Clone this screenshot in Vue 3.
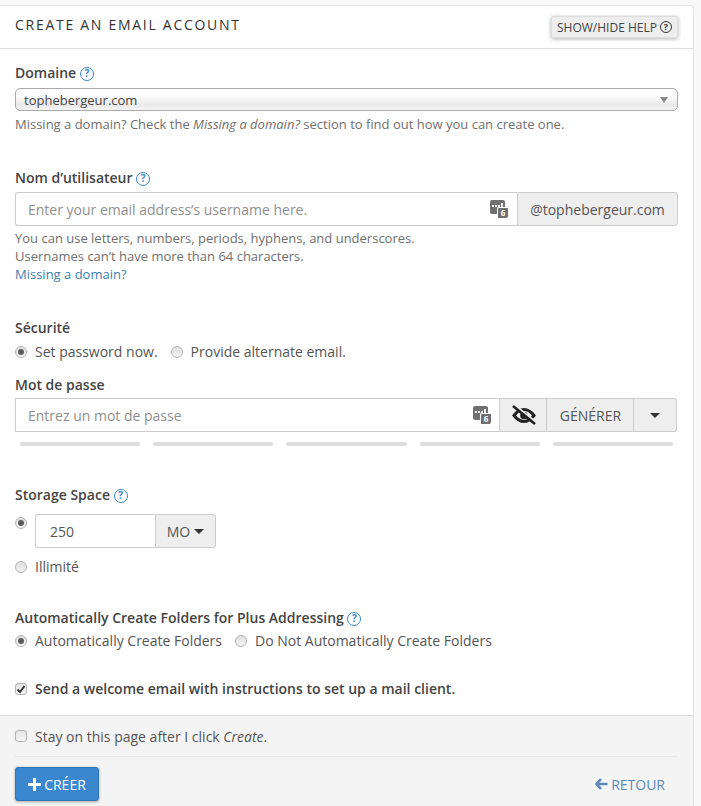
<template>
  <div class="page">
    <div class="panel">
      <div class="panel-head">
        <h1>CREATE AN EMAIL ACCOUNT</h1>
        <button class="help-toggle">SHOW/HIDE HELP <span class="q q-dark">?</span></button>
      </div>

      <div class="panel-body">
        <section class="domain">
          <label class="lbl">Domaine <span class="q">?</span></label>
          <div class="select">
            <span>tophebergeur.com</span>
            <i class="select-arrow"></i>
          </div>
          <p class="hint">Missing a domain? Check the <em>Missing a domain?</em> section to find out how you can create one.</p>
        </section>

        <section class="username">
          <label class="lbl">Nom d’utilisateur <span class="q">?</span></label>
          <div class="group">
            <div class="input grow">
              <span class="placeholder">Enter your email address’s username here.</span>
              <span class="strength-icon"><i class="dots"></i><b>6</b></span>
            </div>
            <div class="addon domain-addon">@tophebergeur.com</div>
          </div>
          <p class="hint first">You can use letters, numbers, periods, hyphens, and underscores.</p>
          <p class="hint">Usernames can’t have more than 64 characters.</p>
          <a class="hint link">Missing a domain?</a>
        </section>

        <section class="security">
          <label class="lbl">Sécurité</label>
          <div class="options">
            <span class="opt"><i class="radio on"></i>Set password now.</span>
            <span class="opt"><i class="radio"></i>Provide alternate email.</span>
          </div>
          <label class="lbl pass-lbl">Mot de passe</label>
          <div class="group pass-group">
            <div class="input grow">
              <span class="placeholder">Entrez un mot de passe</span>
              <span class="strength-icon"><i class="dots"></i><b>6</b></span>
            </div>
            <div class="addon eye">
              <svg width="24" height="20" viewBox="0 0 24 20">
                <path d="M2 10.500 C5.500 6 9 4.500 12 4.500 C15 4.500 18.500 6 22 10.500 C18.500 15 15 16.500 12 16.500 C9 16.500 5.500 15 2 10.500 Z" fill="none" stroke="#222" stroke-width="3" />
                <circle cx="12" cy="10.500" r="3.800" fill="#222" />
                <path d="M2.500 0 L24.500 17.500" stroke="#eee" stroke-width="2" />
                <path d="M1 1 L23 19" stroke="#222" stroke-width="2.600" />
              </svg>
            </div>
            <div class="addon gen">GÉNÉRER</div>
            <div class="addon more"><i class="caret"></i></div>
          </div>
          <div class="bars">
            <i v-for="n in 5" :key="n"></i>
          </div>
        </section>

        <section class="storage">
          <label class="lbl">Storage Space <span class="q">?</span></label>
          <div class="quota">
            <i class="radio on"></i>
            <div class="group quota-group">
              <div class="input quota-input">250</div>
              <div class="addon unit">MO <i class="caret"></i></div>
            </div>
          </div>
          <span class="opt unlimited"><i class="radio"></i>Illimité</span>
        </section>

        <section class="folders">
          <label class="lbl">Automatically Create Folders for Plus Addressing <span class="q">?</span></label>
          <div class="options">
            <span class="opt"><i class="radio on"></i>Automatically Create Folders</span>
            <span class="opt"><i class="radio"></i>Do Not Automatically Create Folders</span>
          </div>
        </section>

        <div class="welcome">
          <i class="check on">
            <svg width="10" height="10" viewBox="0 0 10 10"><path d="M1.500 5.500 L4 8 L8.500 2" fill="none" stroke="#333" stroke-width="2" /></svg>
          </i>
          Send a welcome email with instructions to set up a mail client.
        </div>
      </div>

      <div class="panel-foot">
        <div class="stay"><i class="check"></i>Stay on this page after I click&nbsp;<em>Create</em>.</div>
        <div class="actions">
          <button class="create"><span class="plus"></span>CRÉER</button>
          <a class="back">
            <svg width="13" height="12" viewBox="0 0 13 12"><path d="M6 1 L1.500 6 L6 11 M2 6 H12.500" fill="none" stroke="#5b8ab8" stroke-width="2.600" /></svg>
            RETOUR
          </a>
        </div>
      </div>
    </div>
  </div>
</template>

<script setup>
</script>

<style>
html, body { margin: 0; background: #f9f9f9; }
</style>

<style scoped>
.page {
  width: 701px;
  height: 806px;
  overflow: hidden;
  padding-top: 5px;
  box-sizing: border-box;
  font-family: "Open Sans", sans-serif;
  font-size: 14px;
  color: #444;
}

.panel {
  width: 694px;
  height: 801px;
  box-sizing: border-box;
  background: #fff;
  border: 1px solid #e3e3e3;
  border-left: none;
  border-bottom: none;
  border-radius: 0 4px 0 0;
  display: flex;
  flex-direction: column;
}

.panel-head {
  height: 42px;
  flex: none;
  border-bottom: 1px solid #ddd;
  display: flex;
  align-items: center;
  justify-content: space-between;
  padding: 0 15px;
}

.panel-head h1 {
  margin: 0 0 6px;
  font-size: 14px;
  font-weight: 500;
  letter-spacing: 1.72px;
  color: #333;
}

.help-toggle {
  display: flex;
  align-items: center;
  justify-content: center;
  gap: 3px;
  font-family: inherit;
  font-size: 12px;
  color: #444;
  background: #eee;
  border: 1px solid #ddd;
  border-radius: 2px;
  box-shadow: 0 1px 4px rgba(0, 0, 0, 0.3);
  height: 22px;
  width: 127px;
  padding: 0;
  white-space: nowrap;
}

.panel-body {
  flex: 1;
  padding: 0 15px;
}

.lbl {
  display: block;
  font-weight: 600;
  color: #444;
  font-size: 14px;
  line-height: 20px;
}

.q {
  display: inline-block;
  box-sizing: border-box;
  width: 14px;
  height: 14px;
  border: 1.4px solid #3a87c8;
  border-radius: 50%;
  color: #3a87c8;
  font-size: 10px;
  font-weight: 700;
  line-height: 11px;
  text-align: center;
  vertical-align: 1px;
}

.q-dark {
  width: 12px;
  height: 12px;
  border-color: #333;
  color: #333;
  font-size: 9px;
  line-height: 9.5px;
}

.domain { padding-top: 14px; }

.select {
  height: 23px;
  box-sizing: border-box;
  margin-top: 5px;
  border: 1px solid #aaa;
  border-radius: 5px;
  background: linear-gradient(#fff 25%, #e9e9e9 75%, #f4f4f4);
  display: flex;
  align-items: center;
  justify-content: space-between;
  padding: 0 9px 0 8px;
  font-size: 13px;
  color: #444;
}

.select-arrow {
  width: 0;
  height: 0;
  border: 4px solid transparent;
  border-top: 6px solid #888;
  border-bottom: none;
}

.hint {
  display: block;
  margin: 0;
  font-size: 13px;
  line-height: 18px;
  color: #6f6f6f;
}

.domain .hint { margin-top: 4px; }

.link { color: #3d7fae; }

.username { padding-top: 35px; }

.group {
  display: flex;
  height: 34px;
  box-sizing: border-box;
  margin-top: 4px;
}

.input {
  box-sizing: border-box;
  border: 1px solid #ccc;
  border-right: none;
  display: flex;
  align-items: center;
  justify-content: space-between;
  padding: 0 10px 0 12px;
  background: #fff;
}

.grow { flex: 1; border-radius: 3px 0 0 3px; }

.placeholder { color: #8f8f8f; font-size: 14px; }

.addon {
  box-sizing: border-box;
  background: #eee;
  border: 1px solid #ccc;
  display: flex;
  align-items: center;
  justify-content: center;
  color: #555;
  font-size: 14px;
}

.domain-addon {
  width: 161px;
  border-radius: 0 3px 3px 0;
}

.strength-icon {
  position: relative;
  display: block;
  width: 15px;
  height: 14px;
  margin: 0 2px 4px 0;
  background: #707070;
  border-radius: 2px;
}

.strength-icon .dots {
  position: absolute;
  left: 2px;
  top: 5px;
  width: 2px;
  height: 2px;
  background: #eee;
  box-shadow: 3px 0 #eee, 6px 0 #eee, 9px -2px #eee, 9px 0 #eee;
}

.strength-icon b {
  position: absolute;
  right: -3px;
  bottom: -4px;
  width: 10px;
  height: 10px;
  background: #707070;
  border: 1px solid #fff;
  border-right: none;
  border-bottom: none;
  border-radius: 2px 0 2px 0;
  color: #fff;
  font-size: 8px;
  font-weight: 700;
  line-height: 10px;
  text-align: center;
}

.username .hint.first { margin-top: 3px; }

.security { padding-top: 35px; }

.options {
  display: flex;
  gap: 13px;
  margin-top: 4px;
  line-height: 20px;
}

.opt {
  display: inline-flex;
  align-items: center;
  color: #555;
}

.radio {
  display: inline-block;
  position: relative;
  box-sizing: border-box;
  width: 12px;
  height: 12px;
  border-radius: 50%;
  border: 1px solid #b4b4b4;
  background: linear-gradient(#dedede, #f5f5f5);
  margin-right: 8px;
  flex: none;
}

.radio.on::after {
  content: "";
  position: absolute;
  left: 2px;
  top: 2px;
  width: 6px;
  height: 6px;
  border-radius: 50%;
  background: #5c5c5c;
}

.pass-lbl { margin-top: 13px; }

.pass-group { margin-top: 3px; margin-right: 1px; }

.pass-group .grow { border-radius: 0; }

.pass-group .strength-icon { margin-right: 1px; }

.eye { width: 48px; padding-left: 2px; }

.gen { width: 87px; border-left: none; padding-left: 1px; }

.more {
  width: 43px;
  border-left: none;
  border-radius: 0 3px 3px 0;
}

.caret {
  display: inline-block;
  width: 0;
  height: 0;
  border: 5px solid transparent;
  border-top: 5px solid #333;
  border-bottom: none;
}

.bars {
  display: grid;
  grid-template-columns: repeat(5, 1fr);
  gap: 13px;
  padding: 0 5px;
  margin-top: 10px;
}

.bars i {
  height: 4px;
  border-radius: 2px;
  background: #ddd;
}

.storage { padding-top: 39px; }

.quota {
  display: flex;
  align-items: flex-start;
  margin-top: 9px;
}

.quota .radio { margin-top: 3px; }

.quota-group { margin-top: 0; }

.quota-input {
  width: 120px;
  padding-left: 14px;
  justify-content: flex-start;
  border-radius: 3px 0 0 3px;
  color: #555;
}

.unit {
  width: 61px;
  gap: 4px;
  border-radius: 0 3px 3px 0;
}

.unlimited {
  display: flex;
  margin-top: 9px;
  line-height: 20px;
}

.folders { padding-top: 31px; }

.folders .options { margin-top: 3px; }

.welcome {
  display: flex;
  align-items: center;
  margin-top: 28px;
  font-weight: 600;
  color: #444;
  line-height: 20px;
}

.check {
  display: inline-flex;
  align-items: center;
  justify-content: center;
  box-sizing: border-box;
  width: 12px;
  height: 12px;
  border: 1px solid #b4b4b4;
  border-radius: 3px;
  background: linear-gradient(#e4e4e4, #f6f6f6);
  margin-right: 8px;
  flex: none;
}

.panel-foot {
  flex: none;
  height: 91px;
  box-sizing: border-box;
  background: #f4f4f4;
  border-top: 1px solid #ddd;
  padding: 0 16px 0 15px;
}

.stay {
  display: flex;
  align-items: center;
  height: 40px;
  border-bottom: 1px solid #e8e8e8;
  color: #555;
}

.actions {
  display: flex;
  align-items: center;
  justify-content: space-between;
  margin-top: 10px;
}

.create {
  display: flex;
  align-items: center;
  justify-content: center;
  width: 84px;
  height: 34px;
  padding: 0;
  font-family: inherit;
  font-size: 14px;
  color: #fff;
  background: #3a87d0;
  border: 1px solid #2f74b5;
  border-radius: 3px;
  box-shadow: 0 1px 3px rgba(0, 0, 0, 0.3);
}

.plus {
  display: block;
  width: 13px;
  height: 13px;
  margin-right: 3px;
  background:
    linear-gradient(#fff, #fff) center / 13px 3px no-repeat,
    linear-gradient(#fff, #fff) center / 3px 13px no-repeat;
}

.back {
  display: flex;
  align-items: center;
  gap: 3px;
  color: #5b8ab8;
  font-size: 14px;
  margin-right: 12px;
}
</style>
